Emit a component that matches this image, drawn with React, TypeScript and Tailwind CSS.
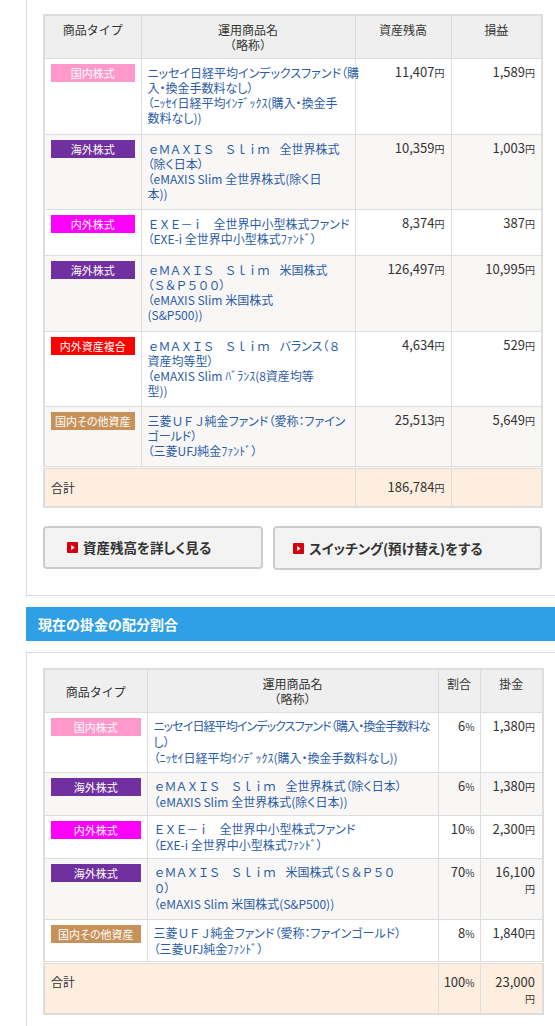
import React from "react";

const FONT = "font-['Noto_Sans_CJK_JP',sans-serif]";

type BadgeKind = "dom" | "for" | "mix" | "bal" | "oth";
const badgeInfo: Record<BadgeKind, { label: string; cls: string }> = {
  dom: { label: "国内株式", cls: "bg-[#ff99cc]" },
  for: { label: "海外株式", cls: "bg-[#7030a0]" },
  mix: { label: "内外株式", cls: "bg-[#ff00ff]" },
  bal: { label: "内外資産複合", cls: "bg-[#ff0000]" },
  oth: { label: "国内その他資産", cls: "bg-[#c8915a]" },
};

function Badge({ kind }: { kind: BadgeKind }) {
  const b = badgeInfo[kind];
  return (
    <div className={`h-[18px] flex items-center justify-center text-[11px] leading-none text-white [font-feature-settings:'palt'] ${b.cls}`}>
      {b.label}
    </div>
  );
}

function Yen({ v }: { v: string }) {
  return (
    <>
      {v}
      <span className="text-[10px]">円</span>
    </>
  );
}

const WIDE = /[\uFF10-\uFF19\uFF21-\uFF3A\uFF41-\uFF5A\uFF06\uFF0D\u3000]/;

function Seg({ text }: { text: string }) {
  const parts: { wide: boolean; s: string }[] = [];
  for (const ch of Array.from(text)) {
    const w = WIDE.test(ch);
    const last = parts[parts.length - 1];
    if (last && last.wide === w) last.s += ch;
    else parts.push({ wide: w, s: ch });
  }
  return (
    <>
      {parts.map((p, i) =>
        p.wide ? (
          <span key={i} className="[font-feature-settings:normal] tracking-[-1px]">
            {p.s}
          </span>
        ) : (
          <span key={i}>{p.s}</span>
        )
      )}
    </>
  );
}

function Lines({ lines, tight }: { lines: string[]; tight?: number }) {
  return (
    <>
      {lines.map((l, i) => (
        <div key={i} className={`whitespace-nowrap ${tight === i ? "tracking-[-0.9px]" : ""}`}>
          <Seg text={l} />
        </div>
      ))}
    </>
  );
}

const B = "border border-[#dddddd] align-top";
const headCell =
  "border border-[#dddddd] bg-[#efefef] text-center text-[12px] leading-[15px] text-[#333] pt-[6px] pb-[6px] align-top font-normal";

// table 1 cells
const t1Badge = `${B} px-[6px] pt-[5px]`;
const t1Name = `${B} px-[6px] pt-[6px] text-[12px] leading-[15px] text-[#2b5ca8] [font-feature-settings:'palt']`;
const t1Num = `${B} px-[6px] pt-[5px] text-right text-[13px] leading-4 text-[#333]`;

// table 2 cells
const t2Badge = `${B} px-[6px] pt-[5px]`;
const t2Name = `${B} px-[6px] pt-[5px] text-[12px] leading-4 text-[#2b5ca8] [font-feature-settings:'palt']`;
const t2Num = `${B} pt-[5px] text-right text-[13px] leading-4 text-[#333]`;

const totCell = "border border-[#dddddd] border-t-[3px] [border-top-style:double] text-[#333] align-middle";

const rows1: { kind: BadgeKind; lines: string[]; bal: string; pl: string; pb: string }[] = [
  {
    kind: "dom",
    lines: ["ニッセイ日経平均インデックスファンド（購", "入・換金手数料なし）", "（ﾆｯｾｲ日経平均ｲﾝﾃﾞｯｸｽ(購入・換金手", "数料なし))"],
    bal: "11,407",
    pl: "1,589",
    pb: "pb-[9px]",
  },
  {
    kind: "for",
    lines: ["ｅＭＡＸＩＳ　Ｓｌｉｍ　全世界株式", "（除く日本）", "（eMAXIS Slim 全世界株式(除く日", "本))"],
    bal: "10,359",
    pl: "1,003",
    pb: "pb-[8px]",
  },
  {
    kind: "mix",
    lines: ["ＥＸＥ－ｉ　全世界中小型株式ファンド", "（EXE-i 全世界中小型株式ﾌｧﾝﾄﾞ）"],
    bal: "8,374",
    pl: "387",
    pb: "pb-[9px]",
  },
  {
    kind: "for",
    lines: ["ｅＭＡＸＩＳ　Ｓｌｉｍ　米国株式", "（Ｓ＆Ｐ５００）", "（eMAXIS Slim 米国株式", "(S&P500))"],
    bal: "126,497",
    pl: "10,995",
    pb: "pb-[9px]",
  },
  {
    kind: "bal",
    lines: ["ｅＭＡＸＩＳ　Ｓｌｉｍ　バランス（８", "資産均等型）", "（eMAXIS Slim ﾊﾞﾗﾝｽ(8資産均等", "型))"],
    bal: "4,634",
    pl: "529",
    pb: "pb-[8px]",
  },
  {
    kind: "oth",
    lines: ["三菱ＵＦＪ純金ファンド（愛称：ファイン", "ゴールド）", "（三菱UFJ純金ﾌｧﾝﾄﾞ）"],
    bal: "25,513",
    pl: "5,649",
    pb: "pb-[8px]",
  },
];

const rows2: { kind: BadgeKind; lines: string[]; pct: string; amt: string; wrap?: boolean; tight?: number; pb: string }[] = [
  {
    kind: "dom",
    lines: ["ニッセイ日経平均インデックスファンド（購入・換金手数料な", "し）", "（ﾆｯｾｲ日経平均ｲﾝﾃﾞｯｸｽ(購入・換金手数料なし))"],
    pct: "6",
    amt: "1,380",
    tight: 0,
    pb: "pb-[6px]",
  },
  {
    kind: "for",
    lines: ["ｅＭＡＸＩＳ　Ｓｌｉｍ　全世界株式（除く日本）", "（eMAXIS Slim 全世界株式(除く日本))"],
    pct: "6",
    amt: "1,380",
    pb: "pb-[5px]",
  },
  {
    kind: "mix",
    lines: ["ＥＸＥ－ｉ　全世界中小型株式ファンド", "（EXE-i 全世界中小型株式ﾌｧﾝﾄﾞ）"],
    pct: "10",
    amt: "2,300",
    pb: "pb-[5px]",
  },
  {
    kind: "for",
    lines: ["ｅＭＡＸＩＳ　Ｓｌｉｍ　米国株式（Ｓ＆Ｐ５０", "０）", "（eMAXIS Slim 米国株式(S&P500))"],
    pct: "70",
    amt: "16,100",
    wrap: true,
    pb: "pb-[7px]",
  },
  {
    kind: "oth",
    lines: ["三菱ＵＦＪ純金ファンド（愛称：ファインゴールド）", "（三菱UFJ純金ﾌｧﾝﾄﾞ）"],
    pct: "8",
    amt: "1,840",
    pb: "pb-[4px]",
  },
];

function Arrow() {
  return (
    <svg width="11" height="11" viewBox="0 0 11 11" className="shrink-0">
      <rect width="11" height="11" rx="1" fill="#d40010" />
      <path d="M4.2 3 L7.6 5.5 L4.2 8 Z" fill="#fff" />
    </svg>
  );
}

export default function App() {
  return (
    <div className={`w-[555px] h-[1026px] overflow-hidden bg-white ${FONT}`}>
      <div className="ml-[26px] w-[560px]">
        {/* Panel 1 */}
        <div className="border-l border-b border-r border-[#dddddd] pt-[14px] pl-[16px] pb-[25px]">
          <table className="table-fixed border-collapse w-[498px] border-2 border-[#dddddd]">
            <colgroup>
              <col className="w-[97px]" />
              <col className="w-[214px]" />
              <col className="w-[96px]" />
              <col className="w-[91px]" />
            </colgroup>
            <thead>
              <tr>
                <th className={headCell}>商品タイプ</th>
                <th className={headCell}>
                  運用商品名
                  <br />
                  （略称）
                </th>
                <th className={headCell}>資産残高</th>
                <th className={headCell}>損益</th>
              </tr>
            </thead>
            <tbody>
              {rows1.map((r, i) => (
                <tr key={i} className={i % 2 === 1 ? "bg-[#f9f7f6]" : "bg-white"}>
                  <td className={t1Badge}>
                    <Badge kind={r.kind} />
                  </td>
                  <td className={`${t1Name} ${r.pb}`}>
                    <Lines lines={r.lines} />
                  </td>
                  <td className={t1Num}>
                    <Yen v={r.bal} />
                  </td>
                  <td className={t1Num}>
                    <Yen v={r.pl} />
                  </td>
                </tr>
              ))}
              <tr className="bg-[#fdeee0]">
                <td colSpan={2} className={`${totCell} px-[6px] pt-[10px] pb-[10px] text-[12px] leading-4`}>
                  合計
                </td>
                <td className={`${totCell} px-[6px] pt-[10px] pb-[10px] text-right text-[13px] leading-4`}>
                  <Yen v="186,784" />
                </td>
                <td className={totCell}></td>
              </tr>
            </tbody>
          </table>

          <div className="flex gap-[10px] mt-[18px] [font-feature-settings:'palt']">
            <div className="w-[220px] h-[43px] border-2 border-[#cccccc] rounded-[4px] bg-[#f3f3f3] flex items-center pl-[22px] gap-[5px] text-[13.5px] font-bold text-[#333]">
              <Arrow />
              <span>資産残高を詳しく見る</span>
            </div>
            <div className="w-[269px] h-[44px] border-2 border-[#cccccc] rounded-[4px] bg-[#f3f3f3] flex items-center pl-[18px] gap-[5px] text-[13.5px] font-bold text-[#333]">
              <Arrow />
              <span>スイッチング(預け替え)をする</span>
            </div>
          </div>
        </div>

        {/* Section header */}
        <div className="mt-[11px] h-[34px] bg-[#2fa0e6] flex items-center pl-[12px] text-white text-[14px] font-bold">
          現在の掛金の配分割合
        </div>

        {/* Panel 2 */}
        <div className="mt-[11px] border-t border-l border-r border-[#dddddd] pt-[15px] pl-[16px] pb-[40px]">
          <table className="table-fixed border-collapse w-[499px] border-2 border-[#dddddd]">
            <colgroup>
              <col className="w-[103px]" />
              <col className="w-[291px]" />
              <col className="w-[42px]" />
              <col className="w-[63px]" />
            </colgroup>
            <thead>
              <tr>
                <th className={`${headCell} !align-middle`}>商品タイプ</th>
                <th className={headCell}>
                  運用商品名
                  <br />
                  （略称）
                </th>
                <th className={headCell}>割合</th>
                <th className={headCell}>掛金</th>
              </tr>
            </thead>
            <tbody>
              {rows2.map((r, i) => (
                <tr key={i} className={i % 2 === 1 ? "bg-[#f9f7f6]" : "bg-white"}>
                  <td className={t2Badge}>
                    <Badge kind={r.kind} />
                  </td>
                  <td className={`${t2Name} ${r.pb}`}>
                    <Lines lines={r.lines} tight={r.tight} />
                  </td>
                  <td className={`${t2Num} px-[5px]`}>
                    {r.pct}
                    <span className="text-[10px]">%</span>
                  </td>
                  <td className={`${t2Num} pl-[5px] pr-[7px]`}>
                    {r.wrap ? (
                      <>
                        {r.amt}
                        <br />
                        <span className="text-[10px]">円</span>
                      </>
                    ) : (
                      <Yen v={r.amt} />
                    )}
                  </td>
                </tr>
              ))}
              <tr className="bg-[#fdeee0]">
                <td colSpan={2} className={`${totCell} !align-top px-[6px] pt-[10px] pb-[6px] text-[12px] leading-4`}>
                  合計
                </td>
                <td className={`${totCell} !align-top px-[5px] pt-[10px] pb-[6px] text-right text-[13px] leading-4`}>
                  100<span className="text-[10px]">%</span>
                </td>
                <td className={`${totCell} !align-top pl-[5px] pr-[7px] pt-[10px] pb-[6px] text-right text-[13px] leading-4`}>
                  23,000
                  <br />
                  <span className="text-[10px]">円</span>
                </td>
              </tr>
            </tbody>
          </table>
        </div>
      </div>
    </div>
  );
}
